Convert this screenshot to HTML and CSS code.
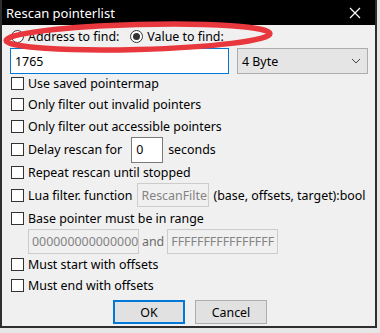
FILE: index.html
```html
<!DOCTYPE html>
<html lang="en">
<head>
    <meta charset="UTF-8">
    <title>Rescan pointerlist</title>
    <link rel="stylesheet" href="styles.css">
</head>
<body>
    <div class="window">
        <!-- barra de titulo -->
        <div class="titlebar">
            <span class="title">Rescan pointerlist</span>
            <svg class="close" width="12" height="12" viewBox="0 0 12 12">
                <path d="M1 1 L11 11 M11 1 L1 11" stroke="#fff" stroke-width="1.2" fill="none"/>
            </svg>
        </div>

        <div class="content">
            <div class="row radio-row">
                <label class="opt"><span class="radio"></span>Address to find:</label>
                <label class="opt opt-value"><span class="radio checked"></span>Value to find:</label>
            </div>

            <div class="row value-row">
                <div class="field field-value">1765</div>
                <div class="combo">
                    <span>4 Byte</span>
                    <svg width="10" height="6" viewBox="0 0 10 6">
                        <path d="M1 1 L5 5 L9 1" stroke="#444" stroke-width="1" fill="none"/>
                    </svg>
                </div>
            </div>

            <div class="row cb-row first"><span class="check"></span>Use saved pointermap</div>
            <div class="row cb-row"><span class="check"></span>Only filter out invalid pointers</div>
            <div class="row cb-row"><span class="check"></span>Only filter out accessible pointers</div>
            <div class="row cb-row delay-row">
                <span class="check"></span>Delay rescan for
                <div class="field field-delay">0</div>
                seconds
            </div>
            <div class="row cb-row repeat-row"><span class="check"></span>Repeat rescan until stopped</div>
            <div class="row cb-row lua-row">
                <span class="check"></span>Lua filter. function
                <div class="field disabled field-lua">RescanFilter</div>
                (base, offsets, target):bool
            </div>
            <div class="row cb-row"><span class="check"></span>Base pointer must be in range</div>
            <div class="row range-row">
                <div class="field disabled field-range">0000000000000000</div>
                <span class="and">and</span>
                <div class="field disabled field-range">FFFFFFFFFFFFFFFF</div>
            </div>
            <div class="row cb-row start-row"><span class="check"></span>Must start with offsets</div>
            <div class="row cb-row"><span class="check"></span>Must end with offsets</div>

            <div class="buttons">
                <button class="btn btn-default">OK</button>
                <button class="btn">Cancel</button>
            </div>
        </div>

        <!-- marcacao vermelha -->
        <svg class="mark" width="280" height="36" viewBox="0 0 280 36">
            <ellipse cx="136" cy="17" rx="132" ry="12.5" fill="none" stroke="#e8383d" stroke-width="5.5" transform="rotate(-1.5 136 17)"/>
        </svg>
    </div>
</body>
</html>
```

FILE: styles.css
```css
body {
    margin: 0;
    background: #e6e6e6;
    font-family: "Noto Sans", sans-serif;
    font-size: 12.4px;
    color: #000;
}

.window {
    position: relative;
    width: 373px;
    height: 326px;
    background: #f0f0f0;
    border: 2px solid #2e2e2e;
    border-top: none;
    overflow: hidden;
}

.titlebar {
    height: 25px;
    background: #000;
    color: #fff;
    display: flex;
    align-items: center;
    justify-content: space-between;
    padding: 0 14px 0 4px;
}

.title {
    font-size: 13px;
}

.content {
    display: flex;
    flex-direction: column;
    padding-left: 9px;
}

.row {
    display: flex;
    align-items: center;
    white-space: nowrap;
}

.radio-row {
    height: 23px;
}

.opt {
    display: flex;
    align-items: center;
}

.opt-value {
    margin-left: 11px;
}

.radio {
    width: 11px;
    height: 11px;
    border: 1px solid #333;
    border-radius: 50%;
    background: #fff;
    margin-right: 4px;
    position: relative;
}

.radio.checked::after {
    content: "";
    position: absolute;
    left: 2px;
    top: 2px;
    width: 7px;
    height: 7px;
    border-radius: 50%;
    background: #333;
}

.value-row {
    height: 26px;
    align-items: flex-start;
}

.field {
    box-sizing: border-box;
    background: #fff;
    border: 1px solid #7a7a7a;
    padding: 0 4px;
    display: flex;
    align-items: center;
    overflow: hidden;
}

.field-value {
    width: 219px;
    height: 26px;
    margin-left: -1px;
    border-color: #0078d7;
}

.combo {
    box-sizing: border-box;
    width: 131px;
    height: 26px;
    margin-left: 8px;
    background: #e5e5e5;
    border: 1px solid #adadad;
    display: flex;
    align-items: center;
    justify-content: space-between;
    padding: 0 6px 0 4px;
}

.check {
    box-sizing: border-box;
    width: 13px;
    height: 13px;
    border: 1px solid #333;
    background: #fff;
    margin-right: 4px;
    flex-shrink: 0;
}

.cb-row {
    height: 22px;
}

.cb-row.first {
    height: 19px;
}

.delay-row {
    height: 25px;
}

.field-delay {
    width: 32px;
    height: 26px;
    margin: 0 5px 0 9px;
}

.repeat-row {
    height: 21px;
}

.lua-row {
    height: 24px;
}

.field.disabled {
    background: #f0f0f0;
    border-color: #cccccc;
    color: #838383;
}

.field-lua {
    width: 72px;
    height: 24px;
    margin: 0 4px 0 5px;
    padding-left: 3px;
}

.range-row {
    height: 25px;
    padding-left: 17px;
}

.field-range {
    width: 111px;
    height: 25px;
    padding-left: 3px;
}

.and {
    color: #6d6d6d;
    margin: 0 3px;
}

.start-row {
    height: 20px;
}

.buttons {
    display: flex;
    justify-content: center;
    gap: 10px;
    margin-top: 4px;
    padding-right: 6px;
}

.btn {
    box-sizing: border-box;
    width: 72px;
    height: 24px;
    background: #e1e1e1;
    border: 1px solid #adadad;
    font-family: "Noto Sans", sans-serif;
    font-size: 12.4px;
    color: #000;
    padding: 0;
}

.btn-default {
    border: 2px solid #0078d7;
}

.mark {
    position: absolute;
    left: 0;
    top: 20px;
}
```
